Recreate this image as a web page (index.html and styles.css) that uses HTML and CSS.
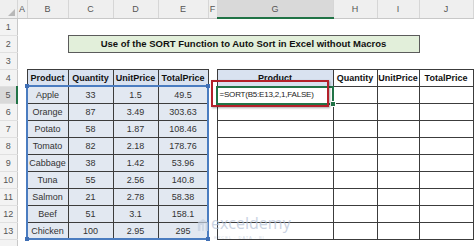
FILE: index.html
```html
<!DOCTYPE html>
<html>
  <head>
    <title>SORT Function - Auto Sort in Excel</title>
    <meta name="viewport" content="width=device-width, initial-scale=1.0" />
    <link rel="stylesheet" href="styles.css">
  </head>
  <body>
    <div class="sheet">
      <table class="grid">
        <colgroup>
          <col class="w-row"><col class="w-a"><col class="w-b"><col class="w-c"><col class="w-d">
          <col class="w-e"><col class="w-f"><col class="w-g"><col class="w-h"><col class="w-i"><col class="w-j">
        </colgroup>
        <thead>
          <tr>
            <th class="corner"><span class="tri"></span></th>
            <th>A</th><th>B</th><th>C</th><th>D</th><th>E</th><th>F</th>
            <th class="on">G</th><th>H</th><th>I</th><th>J</th>
          </tr>
        </thead>
        <tbody>
          <tr><th>1</th><td></td><td></td><td></td><td></td><td></td><td></td><td></td><td></td><td></td><td></td></tr>
          <tr><th>2</th><td></td><td></td><td class="title" colspan="7">Use of the SORT Function to Auto Sort in Excel without Macros</td><td></td></tr>
          <tr><th>3</th><td></td><td></td><td></td><td></td><td></td><td></td><td></td><td></td><td></td><td></td></tr>
          <tr>
            <th>4</th><td></td>
            <td class="b hd">Product</td><td class="b hd">Quantity</td><td class="b hd">UnitPrice</td><td class="b hd">TotalPrice</td>
            <td></td>
            <td class="b hd">Product</td><td class="b hd plain">Quantity</td><td class="b hd plain">UnitPrice</td><td class="b hd plain">TotalPrice</td>
          </tr>
          <tr>
            <th class="on">5</th><td></td>
            <td class="b src">Apple</td><td class="b src">33</td><td class="b src">1.5</td><td class="b src">49.5</td>
            <td></td>
            <td class="b formula">=SORT(B5:E13,2,1,FALSE)</td><td class="b"></td><td class="b"></td><td class="b"></td>
          </tr>
          <tr>
            <th>6</th><td></td>
            <td class="b src">Orange</td><td class="b src">87</td><td class="b src">3.49</td><td class="b src">303.63</td>
            <td></td><td class="b"></td><td class="b"></td><td class="b"></td><td class="b"></td>
          </tr>
          <tr>
            <th>7</th><td></td>
            <td class="b src">Potato</td><td class="b src">58</td><td class="b src">1.87</td><td class="b src">108.46</td>
            <td></td><td class="b"></td><td class="b"></td><td class="b"></td><td class="b"></td>
          </tr>
          <tr>
            <th>8</th><td></td>
            <td class="b src">Tomato</td><td class="b src">82</td><td class="b src">2.18</td><td class="b src">178.76</td>
            <td></td><td class="b"></td><td class="b"></td><td class="b"></td><td class="b"></td>
          </tr>
          <tr>
            <th>9</th><td></td>
            <td class="b src">Cabbage</td><td class="b src">38</td><td class="b src">1.42</td><td class="b src">53.96</td>
            <td></td><td class="b"></td><td class="b"></td><td class="b"></td><td class="b"></td>
          </tr>
          <tr>
            <th>10</th><td></td>
            <td class="b src">Tuna</td><td class="b src">55</td><td class="b src">2.56</td><td class="b src">140.8</td>
            <td></td><td class="b"></td><td class="b"></td><td class="b"></td><td class="b"></td>
          </tr>
          <tr>
            <th>11</th><td></td>
            <td class="b src">Salmon</td><td class="b src">21</td><td class="b src">2.78</td><td class="b src">58.38</td>
            <td></td><td class="b"></td><td class="b"></td><td class="b"></td><td class="b"></td>
          </tr>
          <tr>
            <th>12</th><td></td>
            <td class="b src">Beef</td><td class="b src">51</td><td class="b src">3.1</td><td class="b src">158.1</td>
            <td></td><td class="b"></td><td class="b"></td><td class="b"></td><td class="b"></td>
          </tr>
          <tr>
            <th>13</th><td></td>
            <td class="b src">Chicken</td><td class="b src">100</td><td class="b src">2.95</td><td class="b src">295</td>
            <td></td><td class="b"></td><td class="b"></td><td class="b"></td><td class="b"></td>
          </tr>
          <tr><th></th><td></td><td></td><td></td><td></td><td></td><td></td><td></td><td></td><td></td><td></td></tr>
        </tbody>
      </table>

      <!-- overlays: referenced range, active cell, callout box, watermark -->
      <div class="range">
        <span class="knob tl"></span><span class="knob tr"></span>
        <span class="knob bl"></span><span class="knob br"></span>
      </div>
      <div class="active"><span class="fill-handle"></span></div>
      <div class="callout"></div>
      <div class="watermark">
        <svg class="wm-icon" width="12" height="14" viewBox="0 0 14 16">
          <path d="M7 1 L13 5 V15 H1 V5 Z" fill="#c3cfe0"/>
          <rect x="4" y="8" width="2" height="7" fill="#e6ebf3"/>
          <rect x="8" y="6" width="2" height="9" fill="#e6ebf3"/>
        </svg>
        <div class="wm-text">
          <div class="wm-name">exceldemy</div>
          <div class="wm-sub">EXCEL · DATA · BI</div>
        </div>
      </div>
    </div>
  </body>
</html>
```

FILE: styles.css
```css
body {
  margin: 0;
  background: #ffffff;
  overflow: hidden;
}

.sheet {
  position: relative;
  width: 474px;
  height: 246px;
  overflow: hidden;
}

.grid {
  border-collapse: collapse;
  table-layout: fixed;
  width: 473px;
  font-family: "Liberation Sans", Arial, sans-serif;
  font-size: 9px;
  color: #333;
}

.w-row { width: 17px; }
.w-a { width: 10px; }
.w-b { width: 41px; }
.w-c { width: 45px; }
.w-d { width: 45px; }
.w-e { width: 50px; }
.w-f { width: 9px; }
.w-g { width: 116px; }
.w-h { width: 44px; }
.w-i { width: 42px; }
.w-j { width: 54px; }

.grid td,
.grid th {
  padding: 0;
  text-align: center;
  white-space: nowrap;
  overflow: hidden;
}

.grid tbody tr {
  height: 17px;
}

/* column letters */
.grid thead tr {
  height: 18px;
}

.grid thead th {
  background: #efefef;
  color: #555;
  font-weight: normal;
  border-right: 1px solid #d6d6d6;
  border-bottom: 1px solid #c8c8c8;
}

.grid thead th.on {
  background: #d9d9d9;
  border-bottom: 2px solid #217346;
}

.corner {
  position: relative;
}

.tri {
  position: absolute;
  right: 2px;
  bottom: 2px;
  width: 0;
  height: 0;
  border-left: 7px solid transparent;
  border-bottom: 7px solid #b8b8b8;
}

/* row numbers */
.grid tbody th {
  background: #f3f3f3;
  color: #555;
  font-weight: normal;
  border-right: 1px solid #c8c8c8;
  border-bottom: 1px solid #e0e0e0;
}

.grid tbody th.on {
  background: #d9d9d9;
  border-right: 2px solid #217346;
}

.title {
  background: #e2efda;
  border: 1px solid #5b5b5b;
  font-weight: bold;
  font-size: 9.5px;
  color: #111;
}

.b {
  border: 1px solid #3c3c3c;
}

.hd {
  background: #d9e2f0;
  font-weight: bold;
  color: #111;
}

.hd.plain {
  background: #ffffff;
}

.src {
  background: #e2e8f1;
}

.grid td.formula {
  text-align: left;
  padding-left: 2px;
  font-size: 8px;
  letter-spacing: -0.2px;
  color: #222;
}

.range {
  position: absolute;
  left: 26px;
  top: 85px;
  width: 179px;
  height: 151px;
  border: 2px solid #4a7cc0;
}

.knob {
  position: absolute;
  width: 4px;
  height: 4px;
  background: #3f6fb5;
}

.knob.tl { left: -3px; top: -3px; }
.knob.tr { right: -3px; top: -3px; }
.knob.bl { left: -3px; bottom: -3px; }
.knob.br { right: -3px; bottom: -3px; }

.active {
  position: absolute;
  left: 216px;
  top: 86px;
  width: 114px;
  height: 15px;
  border: 2px solid #217346;
}

.fill-handle {
  position: absolute;
  right: -4px;
  bottom: -4px;
  width: 4px;
  height: 4px;
  background: #217346;
  border: 1px solid #ffffff;
}

.callout {
  position: absolute;
  left: 211px;
  top: 80px;
  width: 114px;
  height: 23px;
  border: 2px solid #b3202a;
  box-shadow: 1px 1px 2px rgba(0, 0, 0, 0.35);
}

.watermark {
  position: absolute;
  left: 197px;
  top: 215px;
  display: flex;
  align-items: flex-start;
  gap: 2px;
  opacity: 0.7;
}

.wm-icon {
  margin-top: 3px;
}

.wm-text {
  display: flex;
  flex-direction: column;
  gap: 3px;
}

.wm-name {
  font-family: "Open Sans", "Liberation Sans", sans-serif;
  font-size: 16px;
  line-height: 17px;
  color: #b3c1d6;
}

.wm-sub {
  font-family: "Liberation Sans", sans-serif;
  font-size: 4px;
  line-height: 5px;
  color: #c2cddd;
  letter-spacing: 1px;
  margin-left: 3px;
}
```
